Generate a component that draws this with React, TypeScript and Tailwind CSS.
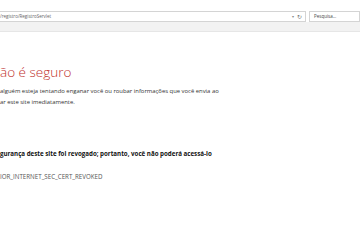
import { FC } from 'react';

const App: FC = () => {
    return (
        <div className="w-[360px] h-[240px] bg-white overflow-hidden font-['Open_Sans',sans-serif]">
            {/* browser chrome */}
            <div className="h-[11px] bg-white" />
            <div className="flex h-[11px] items-stretch">
                <div className="flex flex-1 items-center border-y border-r border-[#d4d4d4] bg-white pr-[3px]">
                    <span className="flex-1 text-[4.5px] leading-none text-[#666] whitespace-nowrap">
                        /registro/RegistroServlet
                    </span>
                    <span className="text-[4px] leading-none text-[#888] mr-[3px]">▾</span>
                    <span className="text-[6px] leading-none text-[#777]">↻</span>
                </div>
                <div className="ml-[3px] w-[51px] flex items-center border border-[#d4d4d4] bg-white px-[4px]">
                    <span className="text-[4.5px] leading-none text-[#444] whitespace-nowrap">Pesquisa...</span>
                </div>
            </div>
            <div className="h-[10px] bg-[#f2f2f2] border-b border-[#e6e6e6]" />

            {/* page */}
            <div className="pt-[31px]">
                <h1 className="text-[13.5px] leading-[18px] font-light text-[#c0302b] whitespace-nowrap">
                    ão é seguro
                </h1>
                <p className="mt-[5px] text-[5.9px] leading-[11px] text-[#333] whitespace-nowrap">
                    alguém esteja tentando enganar você ou roubar informações que você envia ao
                    <br />
                    ar este site imediatamente.
                </p>
                <p className="mt-[41px] text-[6.2px] leading-[10px] font-bold text-[#111] whitespace-nowrap">
                    gurança deste site foi revogado; portanto, você não poderá acessá-lo
                </p>
                <p className="mt-[13px] text-[6.2px] leading-[10px] text-[#555] whitespace-nowrap">
                    IOR_INTERNET_SEC_CERT_REVOKED
                </p>
            </div>
        </div>
    )
}

export default App
